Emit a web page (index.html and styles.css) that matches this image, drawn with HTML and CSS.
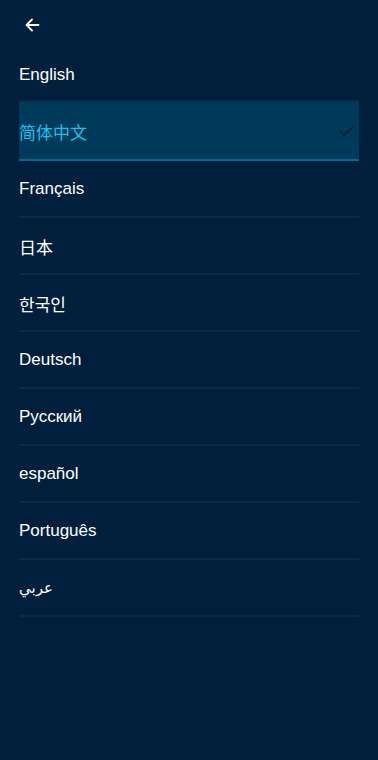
FILE: index.html
```html
<!DOCTYPE html>
<html lang="en">
<head>
    <meta charset="UTF-8">
    <meta name="viewport" content="width=device-width, initial-scale=1.0">
    <link rel="stylesheet" href="styles.css">
</head>
<body>
    <div class="topBar">
        <button class="backBtn" id="backBtn">
            <svg width="16" height="16" viewBox="0 0 16 16">
                <path d="M14.5 8H2.5M8 2.5L2.5 8L8 13.5" fill="none" stroke="#fff" stroke-width="1.8" stroke-linecap="round" stroke-linejoin="round"/>
            </svg>
        </button>
    </div>

    <ul class="langList">
        <li class="langItem first">English</li>
        <li class="langItem active">
            <span class="cjk">简体中文</span>
            <svg class="check" width="17" height="12" viewBox="0 0 17 12">
                <path d="M1.5 5.5L6 10L15.5 1.5" fill="none" stroke="#16222f" stroke-width="2"/>
            </svg>
        </li>
        <li class="langItem">Français</li>
        <li class="langItem cjk">日本</li>
        <li class="langItem kr">한국인</li>
        <li class="langItem">Deutsch</li>
        <li class="langItem">Русский</li>
        <li class="langItem">español</li>
        <li class="langItem">Português</li>
        <li class="langItem ar">عربي</li>
    </ul>
</body>
</html>
```

FILE: styles.css
```css
body {
    margin: 0px;
    background-color: #001f3d;
    font-family: "Liberation Sans", Arial, sans-serif;
    color: #fff;
    height: 760px;
}
.topBar {
    display: flex;
    align-items: center;
    height: 47px;
    padding-left: 24px;
    padding-top: 3px;
    box-sizing: border-box;
}
.backBtn {
    display: flex;
    align-items: center;
    justify-content: center;
    width: 16px;
    height: 16px;
    padding: 0;
    border: none;
    background-color: transparent;
}
.langList {
    list-style: none;
    margin: 0 19px;
    padding: 0;
}
.langItem {
    display: flex;
    align-items: center;
    justify-content: space-between;
    height: 57px;
    padding-top: 1px;
    box-sizing: border-box;
    border-bottom: 2px solid #0d2946;
    font-size: 17px;
}
.langItem.first {
    height: 55px;
    padding-top: 3px;
}
.langItem.active {
    height: 59px;
    background-color: #003a5b;
    border-bottom: 2px solid #006a93;
    color: #14c4ef;
}
.cjk {
    font-family: "Noto Sans CJK SC", sans-serif;
    font-size: 17px;
}
.kr {
    font-family: "Noto Sans CJK KR", sans-serif;
}
.ar {
    font-family: "DejaVu Sans", sans-serif;
    font-size: 15px;
}
.check {
    margin-right: 4px;
}
```
